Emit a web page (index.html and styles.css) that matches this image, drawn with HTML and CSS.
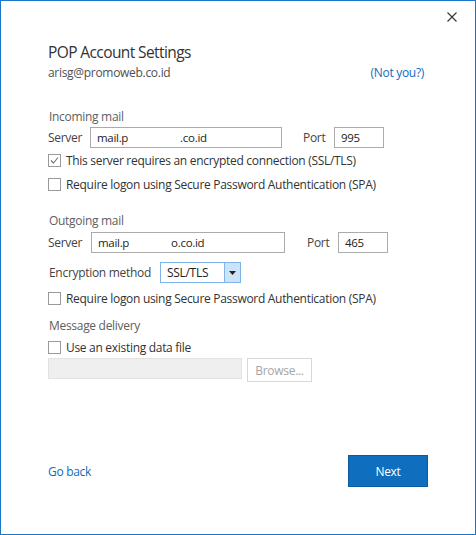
FILE: index.html
```html
<!DOCTYPE html>
<html lang="en">
<head>
<meta charset="utf-8">
<title>POP Account Settings</title>
<link rel="stylesheet" href="styles.css">
</head>
<body>
<div class="dialog">
  <div class="titlebar">
    <button class="close" aria-label="Close">
      <svg width="10" height="10" viewBox="0 0 10 10"><path d="M0.5 0.5 L9.5 9.5 M9.5 0.5 L0.5 9.5" stroke="#333" stroke-width="1.1" fill="none"/></svg>
    </button>
  </div>
  <div class="content">
    <h1 class="title">POP Account Settings</h1>
    <div class="account">
      <span class="email">arisg@promoweb.co.id</span>
      <a class="link" href="#">(Not you?)</a>
    </div>

    <div class="section-label sec-in">Incoming mail</div>
    <div class="server-row row-in">
      <span class="lbl lbl-server">Server</span>
      <div class="input in-server">mail.p<span class="blank1"></span>.co.id</div>
      <span class="lbl lbl-port">Port</span>
      <div class="input in-port">995</div>
    </div>
    <label class="check check-1"><span class="box checked"><svg width="11" height="11" viewBox="0 0 11 11"><path d="M2 5.5 L4.5 8 L9 2.5" stroke="#6d6d6d" stroke-width="1.1" fill="none"/></svg></span>This server requires an encrypted connection (SSL/TLS)</label>
    <label class="check check-2"><span class="box"></span>Require logon using Secure Password Authentication (SPA)</label>

    <div class="section-label sec-out">Outgoing mail</div>
    <div class="server-row row-out">
      <span class="lbl lbl-server2">Server</span>
      <div class="input in-server2">mail.p<span class="blank2"></span>o.co.id</div>
      <span class="lbl lbl-port2">Port</span>
      <div class="input in-port">465</div>
    </div>
    <div class="enc-row">
      <span class="lbl lbl-enc">Encryption method</span>
      <div class="select">
        <span class="select-value">SSL/TLS</span>
        <span class="select-arrow"><svg width="7" height="4" viewBox="0 0 7 4"><path d="M0 0 H7 L3.5 4 Z" fill="#222"/></svg></span>
      </div>
    </div>
    <label class="check check-3"><span class="box"></span>Require logon using Secure Password Authentication (SPA)</label>

    <div class="section-label sec-msg">Message delivery</div>
    <label class="check check-4"><span class="box"></span>Use an existing data file</label>
    <div class="file-row">
      <div class="input disabled-input"></div>
      <button class="browse" disabled>Browse...</button>
    </div>
  </div>
  <div class="footer">
    <a class="link back" href="#">Go back</a>
    <button class="next">Next</button>
  </div>
</div>
</body>
</html>
```
FILE: styles.css
```css
html, body {
  margin: 0;
  padding: 0;
  background: #ffffff;
}
body {
  font-family: "Open Sans", "Noto Sans", "Liberation Sans", sans-serif;
  font-size: 12px;
  letter-spacing: -0.3px;
  color: #333;
}
.dialog {
  width: 476px;
  height: 535px;
  box-sizing: border-box;
  border: 1px solid #1a76c8;
  display: flex;
  flex-direction: column;
  background: #fff;
}
.titlebar {
  display: flex;
  justify-content: flex-end;
  padding: 11px 18px 0 0;
  height: 11px;
}
.close {
  width: 10px;
  height: 10px;
  padding: 0;
  border: 0;
  background: none;
  display: block;
}
.close svg { display: block; }
.content {
  padding: 0 47px 0 47px;
  display: flex;
  flex-direction: column;
}
.title {
  margin: 18px 0 0 0;
  font-size: 15.5px;
  font-weight: 400;
  line-height: 22px;
  color: #333;
  letter-spacing: -0.6px;
}
.account {
  display: flex;
  justify-content: space-between;
  margin-top: 2px;
  line-height: 16px;
  padding-right: 4px;
}
.email { color: #505050; }
.link {
  color: #0f6cbd;
  text-decoration: none;
}
.section-label {
  line-height: 16px;
  color: #606060;
  padding-left: 1px;
}
.sec-in { margin-top: 28px; }
.sec-out { margin-top: 21px; }
.sec-msg { margin-top: 12px; }
.server-row {
  display: flex;
  align-items: center;
  height: 21px;
}
.row-in { margin-top: 2px; }
.row-out { margin-top: 3px; }
.lbl { color: #444; }
.lbl-server { width: 42px; }
.lbl-server2 { width: 43px; }
.input {
  box-sizing: border-box;
  height: 21px;
  border: 1px solid #ababab;
  padding: 0 6px;
  line-height: 19px;
  color: #222;
  font-size: 11.5px;
  background: #fff;
}
.in-server { width: 192px; }
.in-server2 { width: 194px; }
.blank1 { display: inline-block; width: 52px; }
.blank2 { display: inline-block; width: 42px; }
.lbl-port { margin-left: 21px; width: 31px; }
.lbl-port2 { margin-left: 22px; width: 31px; }
.in-port { width: 50px; }
.check {
  display: flex;
  align-items: center;
  height: 16px;
  color: #333;
}
.check-1 { margin-top: 4px; }
.check-2 { margin-top: 8px; }
.check-3 { margin-top: 7px; }
.check-4 { margin-top: 5px; }
.box {
  box-sizing: border-box;
  width: 13px;
  height: 13px;
  border: 1px solid #9a9a9a;
  margin-right: 5px;
  display: flex;
  align-items: center;
  justify-content: center;
  background: #fff;
}
.box svg { display: block; }
.enc-row {
  display: flex;
  align-items: center;
  height: 21px;
  margin-top: 9px;
}
.lbl-enc { width: 112px; padding-left: 1px; box-sizing: border-box; }
.select {
  box-sizing: border-box;
  width: 81px;
  height: 21px;
  border: 1px solid #7eb4ea;
  display: flex;
  align-items: stretch;
}
.select-value {
  flex: 1;
  padding-left: 6px;
  line-height: 19px;
  color: #222;
}
.select-arrow {
  width: 15px;
  background: #cce4f7;
  border-left: 1px solid #7eb4ea;
  display: flex;
  align-items: center;
  justify-content: center;
}
.select-arrow svg { display: block; }
.file-row {
  display: flex;
  align-items: flex-start;
  margin-top: 3px;
}
.disabled-input {
  width: 194px;
  background: #efefef;
  border-color: #e2e2e2;
}
.browse {
  margin-left: 5px;
  width: 65px;
  height: 24px;
  box-sizing: border-box;
  border: 1px solid #d8d8d8;
  background: #fff;
  color: #a6a6a6;
  font-family: inherit;
  font-size: 12px;
  letter-spacing: -0.3px;
  padding: 0;
}
.footer {
  margin-top: auto;
  display: flex;
  justify-content: space-between;
  align-items: center;
  padding: 0 47px 47px 47px;
}
.back { font-size: 12px; }
.next {
  width: 80px;
  height: 32px;
  box-sizing: border-box;
  background: #106ebe;
  border: 1px solid #0b5a9e;
  color: #fff;
  font-family: inherit;
  font-size: 12px;
  letter-spacing: -0.3px;
  padding: 0;
}
```
